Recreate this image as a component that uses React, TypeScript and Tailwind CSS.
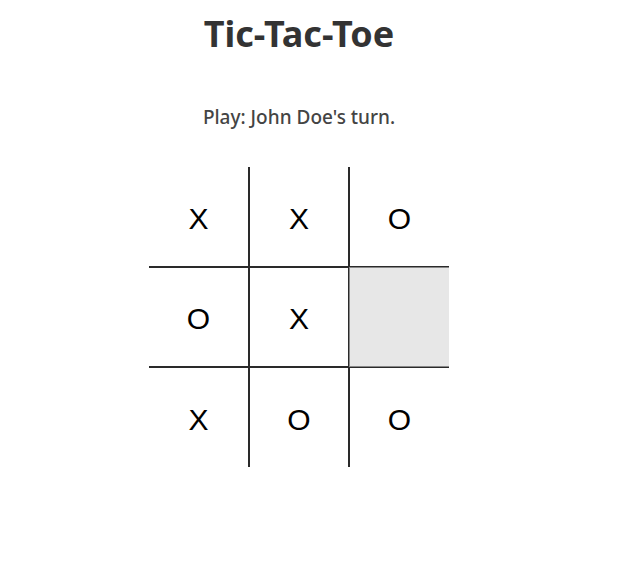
import React from "react";

const board = ["X", "X", "O", "O", "X", "", "X", "O", "O"];

export default function App() {
  return (
    <div className="w-[598px] flex flex-col items-center bg-white" style={{ fontFamily: '"Noto Sans", "Open Sans", sans-serif' }}>
      <h1 className="mt-[11px] text-[36px] leading-[46px] font-bold text-[#333]">Tic-Tac-Toe</h1>
      <p className="mt-[48px] text-[19px] leading-[24px] font-medium text-[#444]">Play: John Doe's turn.</p>
      <div className="mt-[38px] grid grid-cols-[100px_100px_100px]">
        {board.map((v, i) => {
          const r = Math.floor(i / 3);
          const c = i % 3;
          const hl = i === 5;
          const cls = [
            "h-[100px] w-[100px] box-border flex items-center justify-center pt-[3px] text-[30px] text-black",
            c < 2 ? "border-r" : "",
            c > 0 ? "border-l" : "",
            r < 2 ? "border-b" : "",
            r > 0 ? "border-t" : "",
            hl ? "border-[#888888] bg-[#e7e7e7]" : "border-[#2a2a2a]",
          ].join(" ");
          return (
            <div key={i} className={cls} style={{ fontFamily: '"Liberation Sans", Arial, sans-serif' }}>
              {v}
            </div>
          );
        })}
      </div>
    </div>
  );
}
